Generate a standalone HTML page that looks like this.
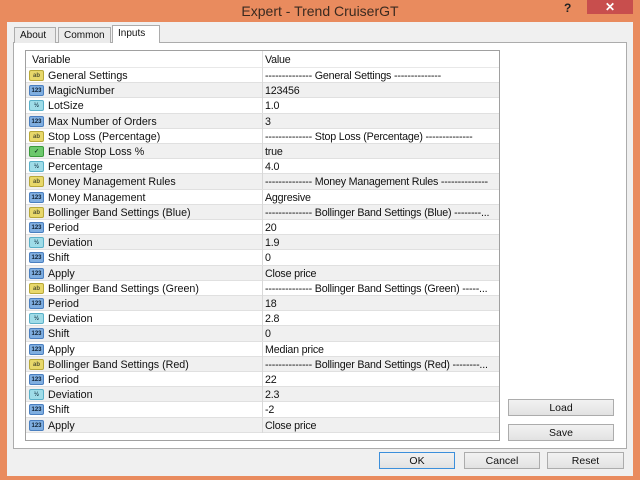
<!DOCTYPE html>
<html><head><meta charset="utf-8"><style>
*{margin:0;padding:0;box-sizing:border-box}
body{width:640px;height:480px;background:#E98B5E;position:relative;overflow:hidden;font-family:"Liberation Sans",sans-serif;font-size:10.7px;color:#111}
.abs{position:absolute}
#title{left:0;top:3px;width:640px;text-align:center;font-size:14px;color:#3a2a20}
#close{left:587px;top:0;width:46px;height:14px;background:#C84E4D;color:#fff;text-align:center;font-size:12px;line-height:14px;font-weight:bold}
#help{left:564px;top:1px;font-weight:bold;font-size:12px;color:#222}
#client{left:7px;top:22px;width:626px;height:454px;background:#F0F0F0}
#panel{left:13px;top:42px;width:614px;height:407px;background:#fff;border:1px solid #ACACAC}
.tab{top:27px;height:16px;border:1px solid #ACACAC;border-bottom:none;background:#EBEBEB;padding:2px 5px;font-size:10px}
#grid{left:25px;top:50px;width:475px;height:391px;border:1px solid #A0A0A0;background:#fff}
.row{position:absolute;left:0;width:473px;height:15.2px;border-bottom:1px solid #E0E0E0;line-height:17px}
.g{background:#F0F0F0}
.row span.v{position:absolute;left:236px;top:0;border-left:1px solid #D8D8D8;padding-left:2px;height:15px;white-space:nowrap;overflow:hidden;width:237px;letter-spacing:-0.2px}
.row span.n{position:absolute;left:22px;top:0}
.ic{position:absolute;left:3px;top:2px;width:15px;height:11px;border-radius:2px;font-size:6px;line-height:11px;text-align:center;font-weight:bold}
.ab{background:#E8D86A;border:1px solid #B8A838;color:#553}
.n1{background:#7FAEE0;border:1px solid #4A7FC0;color:#123}
.hf{background:#9FDCE8;border:1px solid #5AB0C8;color:#245}
.tg{background:#6CC86C;border:1px solid #3A9A3A;color:#132}
.btn{position:absolute;height:17px;border:1px solid #ACACAC;background:linear-gradient(#F2F2F2,#E2E2E2);text-align:center;font-size:10.5px;line-height:16px}
</style></head><body>
<div class="abs" id="title">Expert - Trend CruiserGT</div>
<div class="abs" id="help">?</div>
<div class="abs" id="close">✕</div>
<div class="abs" id="client"></div>
<div class="abs" id="panel"></div>
<div class="abs tab" style="left:14px;width:42px">About</div>
<div class="abs tab" style="left:58px;width:53px">Common</div>
<div class="abs tab" style="left:112px;top:25px;height:18px;width:48px;background:#fff">Inputs</div>
<div class="abs" id="grid">
<div class="row" style="top:0;height:17px;line-height:18px;border-bottom:1px solid #E8E8E8"><span class="n" style="left:6px">Variable</span><span class="v" style="height:17px;border-left:1px solid #E0E0E0">Value</span></div>
<div id="rows"></div>
</div>
<div class="btn" style="left:508px;top:399px;width:106px">Load</div>
<div class="btn" style="left:508px;top:424px;width:106px">Save</div>
<div class="btn" style="left:379px;top:452px;width:76px;border-color:#3C8FDB">OK</div>
<div class="btn" style="left:464px;top:452px;width:76px">Cancel</div>
<div class="btn" style="left:547px;top:452px;width:77px">Reset</div>
<script>
var r=[["ab","General Settings","-------------- General Settings --------------"],
["n1","MagicNumber","123456"],["hf","LotSize","1.0"],["n1","Max Number of Orders","3"],
["ab","Stop Loss (Percentage)","-------------- Stop Loss (Percentage)  --------------"],
["tg","Enable Stop Loss %","true"],["hf","Percentage","4.0"],
["ab","Money Management Rules","-------------- Money Management Rules  --------------"],
["n1","Money Management","Aggresive"],
["ab","Bollinger Band Settings (Blue)","-------------- Bollinger Band Settings (Blue) --------..."],
["n1","Period","20"],["hf","Deviation","1.9"],["n1","Shift","0"],["n1","Apply","Close price"],
["ab","Bollinger Band Settings (Green)","-------------- Bollinger Band Settings (Green) -----..."],
["n1","Period","18"],["hf","Deviation","2.8"],["n1","Shift","0"],["n1","Apply","Median price"],
["ab","Bollinger Band Settings (Red)","-------------- Bollinger Band Settings (Red) --------..."],
["n1","Period","22"],["hf","Deviation","2.3"],["n1","Shift","-2"],["n1","Apply","Close price"]];
var lab={ab:"ab",n1:"123",hf:"½",tg:"✓"};
var h="";
r.forEach(function(x,i){h+='<div class="row'+(i%2?' g':'')+'" style="top:'+(17+i*15.2)+'px"><span class="ic '+x[0]+'">'+lab[x[0]]+'</span><span class="n">'+x[1]+'</span><span class="v">'+x[2]+'</span></div>';});
document.getElementById("rows").innerHTML=h;
</script>
</body></html>
